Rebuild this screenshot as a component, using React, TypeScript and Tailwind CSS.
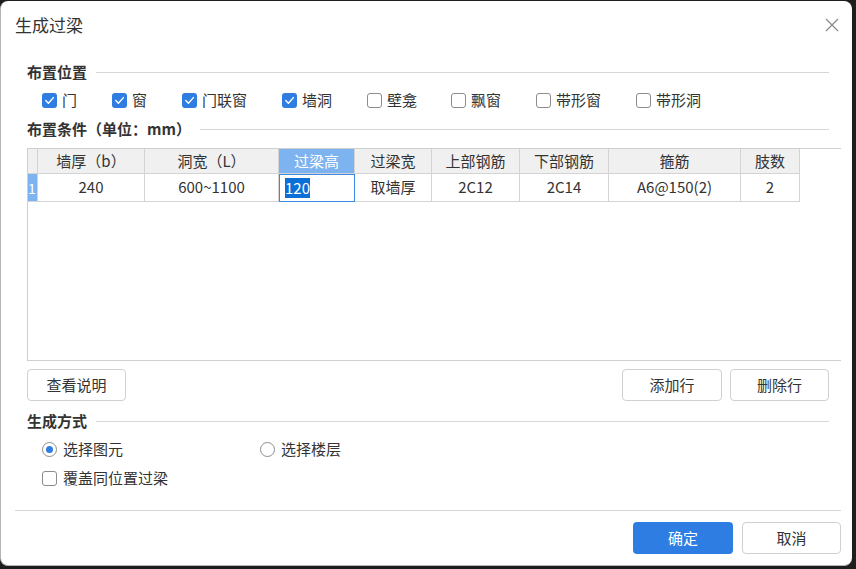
import React from "react";

const checks = [
  { label: "门", on: true, w: "w-[70px]" },
  { label: "窗", on: true, w: "w-[70px]" },
  { label: "门联窗", on: true, w: "w-[100px]" },
  { label: "墙洞", on: true, w: "w-[85px]" },
  { label: "壁龛", on: false, w: "w-[84px]" },
  { label: "飘窗", on: false, w: "w-[85px]" },
  { label: "带形窗", on: false, w: "w-[100px]" },
  { label: "带形洞", on: false, w: "w-[100px]" },
];

const cols = [
  { title: "墙厚（b）", value: "240", w: "w-[107px]" },
  { title: "洞宽（L）", value: "600~1100", w: "w-[134px]" },
  { title: "过梁高", value: "120", w: "w-[76px]", active: true },
  { title: "过梁宽", value: "取墙厚", w: "w-[77px]" },
  { title: "上部钢筋", value: "2C12", w: "w-[88px]" },
  { title: "下部钢筋", value: "2C14", w: "w-[89px]" },
  { title: "箍筋", value: "A6@150(2)", w: "w-[132px]" },
  { title: "肢数", value: "2", w: "w-[59px]" },
];

function CheckBox({ on }: { on: boolean }) {
  if (on) {
    return (
      <span className="flex h-[15px] w-[15px] shrink-0 items-center justify-center rounded-[3px] bg-[#2f7de1]">
        <svg width="11" height="11" viewBox="0 0 11 11" fill="none">
          <path d="M1.8 5.6 L4.4 8.2 L9.4 2.6" stroke="white" strokeWidth="1.4" strokeLinecap="round" strokeLinejoin="round" />
        </svg>
      </span>
    );
  }
  return <span className="block h-[15px] w-[15px] shrink-0 rounded-[3px] border border-[#8c8c8c] bg-white" />;
}

function Radio({ on }: { on: boolean }) {
  return (
    <span className="flex h-[15px] w-[15px] shrink-0 items-center justify-center rounded-full border border-[#8c8c8c] bg-white">
      {on && <span className="block h-[7px] w-[7px] rounded-full bg-[#2f7de1]" />}
    </span>
  );
}

function Heading({ text }: { text: string }) {
  return (
    <div className="mr-[12px] flex h-[20px] items-center">
      <span className="text-[15px] font-bold text-[#333]">{text}</span>
      <div className="ml-[9px] h-px flex-1 bg-[#d6d6d6]" />
    </div>
  );
}

function Button({ children, w }: { children: React.ReactNode; w: string }) {
  return (
    <button className={`${w} h-[32px] rounded-[4px] border border-[#d0d0d0] bg-white text-[15px] text-[#333]`}>
      {children}
    </button>
  );
}

export default function App() {
  return (
    <div className="h-[569px] w-[856px] bg-[#1e1e1e] pt-[1px] font-['Noto_Sans_CJK_SC',sans-serif] text-[#333]">
      <div className="flex h-[565px] w-[852px] flex-col rounded-[8px] border-l border-b border-[#b5b5b5] bg-white">
        {/* title bar */}
        <div className="flex h-[47px] shrink-0 items-center justify-between pl-[14px] pr-[13px]">
          <span className="text-[17px] text-[#333]">生成过梁</span>
          <svg width="14" height="14" viewBox="0 0 14 14" className="mt-[1px]">
            <path d="M1 1 L13 13 M13 1 L1 13" stroke="#8a8a8a" strokeWidth="1.2" />
          </svg>
        </div>

        <div className="flex flex-col pl-[26px] pr-[11px]">
          <div className="mt-[14px]">
            <Heading text="布置位置" />
          </div>
          <div className="mt-[8px] flex h-[20px] items-center pl-[15px]">
            {checks.map((c) => (
              <div key={c.label} className={`${c.w} flex items-center gap-[5px]`}>
                <CheckBox on={c.on} />
                <span className="text-[15px]">{c.label}</span>
              </div>
            ))}
          </div>
          <div className="mt-[9px]">
            <Heading text="布置条件（单位：mm）" />
          </div>

          {/* table */}
          <div className="mt-[9px] h-[213px] border-y border-l border-[#cfcfcf] bg-white">
            <div className="flex h-[25px]">
              <div className="w-[10px] border-r border-b border-[#d4d4d4] bg-[#f0f0f0]" />
              {cols.map((c) => (
                <div
                  key={c.title}
                  className={`${c.w} flex items-center justify-center border-r border-b border-[#d4d4d4] text-[15px] ${
                    c.active ? "bg-[#7db3ee] text-white" : "bg-[#f0f0f0] text-[#333]"
                  }`}
                >
                  {c.title}
                </div>
              ))}
            </div>
            <div className="flex h-[28px]">
              <div className="flex w-[10px] items-center border-r border-b border-[#d4d4d4] bg-[#7db3ee] text-[14px] leading-none text-white">
                1
              </div>
              {cols.map((c) =>
                c.active ? (
                  <div key={c.title} className={`${c.w} flex items-center border border-[#3a8ae3] pl-[5px]`}>
                    <span className="bg-[#0a6fd6] text-[15px] leading-[20px] text-white">{c.value}</span>
                  </div>
                ) : (
                  <div
                    key={c.title}
                    className={`${c.w} flex items-center justify-center border-r border-b border-[#d4d4d4] text-[15px]`}
                  >
                    {c.value}
                  </div>
                )
              )}
            </div>
          </div>

          <div className="mt-[8px] flex items-center pr-[12px]">
            <Button w="w-[99px]">查看说明</Button>
            <div className="flex-1" />
            <Button w="w-[100px]">添加行</Button>
            <div className="w-[8px]" />
            <Button w="w-[99px]">删除行</Button>
          </div>

          <div className="mt-[10px]">
            <Heading text="生成方式" />
          </div>
          <div className="mt-[8px] flex h-[20px] items-center pl-[15px]">
            <div className="flex w-[218px] items-center gap-[6px]">
              <Radio on />
              <span className="text-[15px]">选择图元</span>
            </div>
            <div className="flex items-center gap-[6px]">
              <Radio on={false} />
              <span className="text-[15px]">选择楼层</span>
            </div>
          </div>
          <div className="mt-[9px] flex h-[20px] items-center gap-[6px] pl-[15px]">
            <CheckBox on={false} />
            <span className="text-[15px]">覆盖同位置过梁</span>
          </div>
        </div>

        <div className="ml-[14px] mr-[11px] mt-[22px] h-px bg-[#d6d6d6]" />

        <div className="mt-[11px] flex justify-end gap-[9px] pr-[11px]">
          <button className="h-[32px] w-[100px] rounded-[4px] bg-[#2e7de3] text-[15px] text-white">确定</button>
          <Button w="w-[99px]">取消</Button>
        </div>
      </div>
    </div>
  );
}
